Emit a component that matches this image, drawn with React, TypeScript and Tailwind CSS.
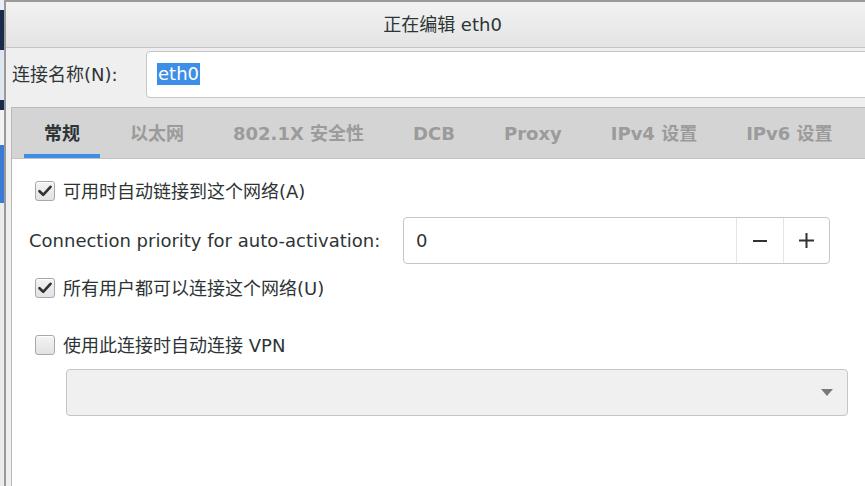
import React from 'react';

const FONT = '"DejaVu Sans", "Noto Sans CJK SC", sans-serif';

const CheckBox = ({ checked }: { checked: boolean }) => (
  <span className="flex h-[20px] w-[20px] shrink-0 items-center justify-center rounded-[3px] border border-[#a8a8a8] bg-gradient-to-b from-[#f4f4f4] to-[#e2e2e2] shadow-[inset_0_1px_0_white]">
    {checked && (
      <svg width="14" height="12" viewBox="0 0 14 12">
        <path d="M1.5 6.2 L5.2 9.8 L12.5 1.8" fill="none" stroke="#2e3436" strokeWidth="2.6" strokeLinecap="round" strokeLinejoin="round" />
      </svg>
    )}
  </span>
);

const TABS = ['常规', '以太网', '802.1X 安全性', 'DCB', 'Proxy', 'IPv4 设置', 'IPv6 设置'];

export default function App() {
  return (
    <div className="flex h-[486px] w-[865px] overflow-hidden bg-white" style={{ fontFamily: FONT }}>
      {/* desktop peeking at left */}
      <div className="flex w-[4px] shrink-0 flex-col">
        <div className="h-[10px] bg-[#e8eef5]" />
        <div className="h-[40px] bg-[#1b2a4a]" />
        <div className="h-[50px] bg-[#dfe6ee]" />
        <div className="h-[10px] bg-[#1b2a4a]" />
        <div className="h-[35px] bg-[#f2f2f2]" />
        <div className="h-[58px] bg-[#3a7bd5]" />
        <div className="flex-1 bg-[#ececec]" />
      </div>

      <div className="flex min-w-0 flex-1 flex-col border-l-2 border-t-2 border-[#9a9a9a] bg-[#efefef]">
        {/* title bar */}
        <div className="flex h-[46px] shrink-0 items-center justify-center border-b border-[#c4c4c4] bg-gradient-to-b from-[#f2f2f2] to-[#e4e4e4] pl-[14px] text-[18px] text-[#2e3436]">
          正在编辑 eth0
        </div>

        {/* name row */}
        <div className="flex h-[50px] shrink-0 items-center pl-[6px] pt-[2px]">
          <span className="w-[134px] text-[18px] text-[#2e3436]">连接名称(N):</span>
          <div className="-mr-[8px] flex h-[47px] flex-1 items-center rounded-l-[4px] border border-[#c6c6c6] bg-white pl-[10px]">
            <span className="bg-[#3d8ee6] px-[1px] text-[18px] leading-[22px] text-white">eth0</span>
          </div>
        </div>

        {/* notebook */}
        <div className="ml-[5px] mt-[9px] flex flex-1 flex-col border-l border-t border-[#b8b8b8] bg-white">
          <div className="flex h-[51px] shrink-0 items-stretch gap-[9px] border-b border-[#c4c4c4] bg-[#d4d4d4] pl-[12px] text-[18px] font-bold">
            {TABS.map((t, i) => (
              <div
                key={t}
                className={
                  i === 0
                    ? 'mr-[1px] flex items-center border-b-[4px] border-[#3d8ee6] px-[20px] pt-[4px] text-[#2e3436]'
                    : 'flex items-center px-[20px] text-[#9b9b9b]'
                }
              >
                {t}
              </div>
            ))}
          </div>

          <div className="flex flex-col text-[18px] text-[#2e3436]">
            <label className="mt-[20px] flex h-[24px] items-center gap-[8px] pl-[23px]">
              <CheckBox checked />
              <span>可用时自动链接到这个网络(A)</span>
            </label>

            <div className="mt-[14px] flex h-[47px] items-center pl-[17px]">
              <span className="w-[374px]">Connection priority for auto-activation:</span>
              <div className="flex h-[47px] w-[427px] items-stretch rounded-[4px] border border-[#c6c6c6] bg-white">
                <span className="flex flex-1 items-center pl-[12px]">0</span>
                <span className="flex w-[47px] items-center justify-center border-l border-[#e4e4e4]">
                  <svg width="14" height="14" viewBox="0 0 14 14"><path d="M0 7h14" stroke="#2e3436" strokeWidth="2" /></svg>
                </span>
                <span className="flex w-[46px] items-center justify-center border-l border-[#e4e4e4]">
                  <svg width="15" height="15" viewBox="0 0 15 15"><path d="M0 7.5h15M7.5 0v15" stroke="#2e3436" strokeWidth="2" /></svg>
                </span>
              </div>
            </div>

            <label className="mt-[12px] flex h-[24px] items-center gap-[8px] pl-[23px]">
              <CheckBox checked />
              <span>所有用户都可以连接这个网络(U)</span>
            </label>

            <label className="mt-[33px] flex h-[24px] items-center gap-[8px] pl-[23px]">
              <CheckBox checked={false} />
              <span>使用此连接时自动连接 VPN</span>
            </label>

            <div className="ml-[54px] mr-[17px] mt-[12px] flex h-[47px] items-center justify-end rounded-[4px] border border-[#c6c6c6] bg-[#f0f0f0] pr-[14px]">
              <svg width="12" height="7" viewBox="0 0 12 7"><path d="M0 0h12L6 7z" fill="#7a7a7a" /></svg>
            </div>
          </div>
        </div>
      </div>
    </div>
  );
}
